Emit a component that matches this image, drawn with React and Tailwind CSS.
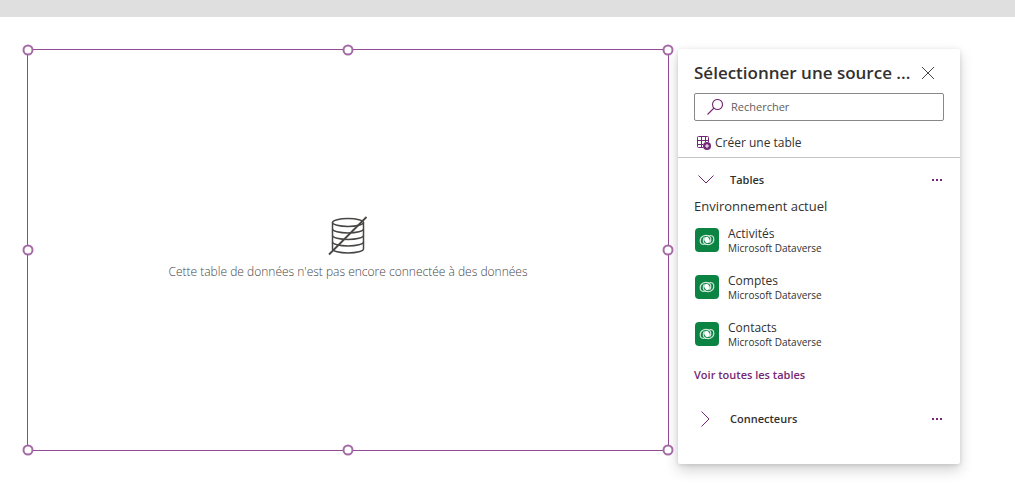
import React from 'react';

const tables = [
  { name: 'Activités', source: 'Microsoft Dataverse' },
  { name: 'Comptes', source: 'Microsoft Dataverse' },
  { name: 'Contacts', source: 'Microsoft Dataverse' },
];

const handles = [
  'left-0 top-0',
  'left-1/2 top-0',
  'left-full top-0',
  'left-0 top-1/2',
  'left-full top-1/2',
  'left-0 top-full',
  'left-1/2 top-full',
  'left-full top-full',
];

const DatabaseOffIcon = () => (
  <svg width="40" height="40" viewBox="0 0 40 40" fill="none" stroke="#484644" strokeWidth="1.500" aria-hidden="true">
    <ellipse cx="20" cy="6.500" rx="15.500" ry="4" />
    <path d="M4.500 6.500V33c0 2.200 6.900 4 15.500 4s15.500-1.800 15.500-4V6.500" />
    <path d="M4.500 13c0 2.200 6.900 4 15.500 4s15.500-1.800 15.500-4M4.500 19.500c0 2.200 6.900 4 15.500 4s15.500-1.800 15.500-4M4.500 26c0 2.200 6.900 4 15.500 4s15.500-1.800 15.500-4" />
    <path d="M1 38.500 38.500 1" strokeWidth="1.800" />
  </svg>
);

const DataverseIcon = () => (
  <svg width="24" height="24" viewBox="0 0 24 24" className="shrink-0" aria-hidden="true">
    <rect width="24" height="24" rx="4" fill="#0b8443" />
    <g fill="none" stroke="#cfe6d8" strokeWidth="1.200" strokeLinecap="round">
      <path d="M13.500 8C10.500 6.300 5.200 8 5.200 12.700c0 2.600 1.700 3.800 3.800 3.800M9.200 9.700C7.400 12 8 15.400 11 16.500" />
      <path d="M10.500 16c3 1.700 8.300 0 8.300-4.700 0-2.600-1.700-3.800-3.800-3.800M14.800 14.300C16.600 12 16 8.600 13 7.500" />
    </g>
    <ellipse cx="12" cy="12" rx="2.500" ry="3.200" transform="rotate(-30 12 12)" fill="#fff" />
  </svg>
);

const TableAddIcon = () => (
  <svg width="14" height="14" viewBox="0 0 14 14" fill="none" stroke="#742774" aria-hidden="true">
    <path d="M6 11.500H1.500a1 1 0 0 1-1-1v-9a1 1 0 0 1 1-1h9a1 1 0 0 1 1 1V6M4.500.5v11M8.500.5V6M.5 4.500h11M.5 8.500H6" />
    <circle cx="10" cy="10" r="4" fill="#742774" stroke="none" />
    <path d="M10 8v4M8 10h4" stroke="#fff" />
  </svg>
);

const SearchIcon = () => (
  <svg width="16" height="16" viewBox="0 0 16 16" fill="none" stroke="#742774" strokeWidth="1.100" aria-hidden="true">
    <circle cx="10.500" cy="5.500" r="5" />
    <path d="M7 9 .5 15.500" />
  </svg>
);

const CloseIcon = () => (
  <svg width="14" height="14" viewBox="0 0 14 14" stroke="#484644" strokeWidth="1" aria-hidden="true">
    <path d="m1 1 12 12M13 1 1 13" />
  </svg>
);

const Chevron = ({ open }) => (
  <svg width="16" height="16" viewBox="0 0 16 16" fill="none" stroke="#742774" aria-hidden="true">
    <path d={open ? 'm.5 3.500 7.500 7.500 7.500-7.500' : 'm3.500.5 7.500 7.500-7.500 7.500'} />
  </svg>
);

const SectionHeader = ({ label, open }) => (
  <div className="flex h-9 items-center justify-between">
    <button type="button" aria-expanded={open} className="flex items-center gap-4 pl-1 text-[11px] font-semibold text-[#323130]">
      <Chevron open={open} />
      {label}
    </button>
    <button type="button" aria-label={`Plus d'options, ${label}`} className="flex h-6 w-[14px] items-center justify-center">
      <svg width="10" height="2" viewBox="0 0 10 2" fill="#742774" aria-hidden="true">
        <path d="M0 0h2v2H0zM4 0h2v2H4zM8 0h2v2H8z" />
      </svg>
    </button>
  </div>
);

const Canvas = () => (
  <section className="relative mb-[13px] flex min-w-0 flex-1 flex-col items-center justify-center border border-[#8f4b8f]">
    <DatabaseOffIcon />
    <p className="mt-1 px-4 text-center text-xs leading-6 font-light text-[#484644]">
      Cette table de données n'est pas encore connectée à des données
    </p>
    {handles.map((position) => (
      <span
        key={position}
        className={`absolute size-[11px] -translate-x-1/2 -translate-y-1/2 rounded-full border-2 border-[#a569a5] bg-white ${position}`}
      />
    ))}
  </section>
);

const SourcePanel = () => (
  <aside className="w-[282px] shrink-0 rounded-xs bg-white pt-3 pb-[27px] shadow-[0_6px_14px_rgba(0,0,0,0.18),0_1px_4px_rgba(0,0,0,0.12)]">
    <div className="flex h-6 items-center justify-between px-4">
      <h2 className="text-[17px] leading-6 font-semibold whitespace-nowrap text-[#323130]">
        Sélectionner une source ...
      </h2>
      <button type="button" aria-label="Fermer" className="mr-2 flex size-4 items-center justify-center">
        <CloseIcon />
      </button>
    </div>

    <label className="mx-4 mt-2 flex h-7 items-center gap-2 rounded-xs border border-[#8a8886] pl-3">
      <SearchIcon />
      <input
        type="text"
        aria-label="Rechercher"
        placeholder="Rechercher"
        className="min-w-0 flex-1 pt-px text-[11px] outline-none placeholder:text-[#605e5c]"
      />
    </label>

    <div className="border-b border-[#c8c6c4] px-4 pt-2">
      <button type="button" className="flex h-7 items-center gap-1 pl-[3px] text-xs text-[#323130]">
        <TableAddIcon />
        Créer une table
      </button>
    </div>

    <div className="px-4 pt-1">
      <SectionHeader label="Tables" open />
      <h3 className="text-[13px] leading-4 text-[#323130]">Environnement actuel</h3>
      <ul className="mt-2 flex flex-col gap-[11px]">
        {tables.map((table) => (
          <li key={table.name}>
            <button type="button" className="flex h-9 w-full items-center gap-[9px] pl-px text-left text-[#323130]">
              <DataverseIcon />
              <span className="flex flex-col">
                <span className="text-xs leading-4">{table.name}</span>
                <span className="text-[10px] leading-3">{table.source}</span>
              </span>
            </button>
          </li>
        ))}
      </ul>
      <a href="#tables" className="mt-[13px] block text-[11px] leading-5 font-semibold text-[#742774]">
        Voir toutes les tables
      </a>
      <div className="mt-4">
        <SectionHeader label="Connecteurs" open={false} />
      </div>
    </div>
  </aside>
);

export default function App() {
  return (
    <div className="min-h-screen bg-white font-['Open_Sans',sans-serif]">
      <header className="h-[17px] bg-[#dfdfdf]" />
      <main className="flex gap-[9px] pt-8 pr-[55px] pl-[27px]">
        <Canvas />
        <SourcePanel />
      </main>
    </div>
  );
}
